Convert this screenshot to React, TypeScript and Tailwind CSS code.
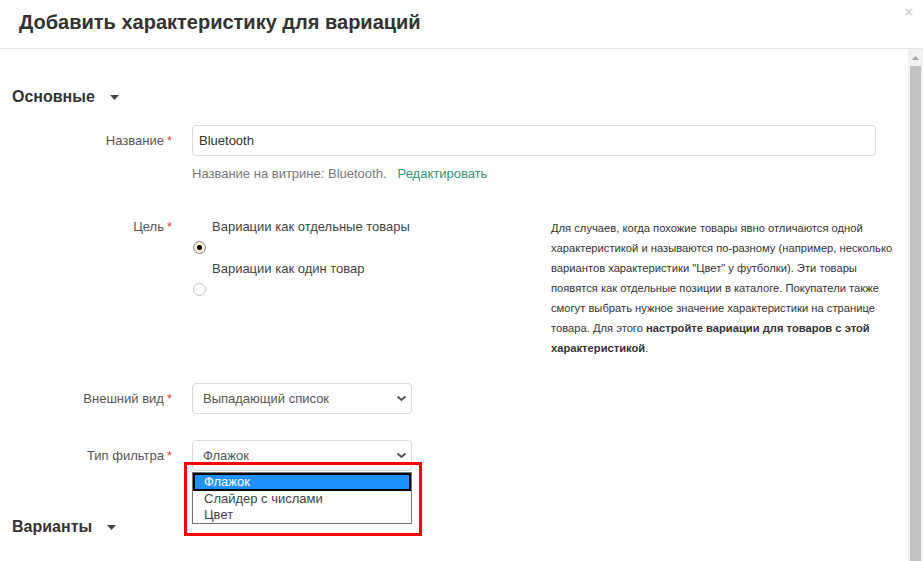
import React from 'react';

const Req = () => <span className="ml-[3px] text-[#e0474c]">*</span>;

const Chevron = () => (
  <svg width="11" height="7" viewBox="0 0 11 7" className="shrink-0">
    <path d="M1.5 1.5 L5.5 5 L9.5 1.5" fill="none" stroke="#555" strokeWidth="2" />
  </svg>
);

const Caret = () => (
  <svg width="9" height="5" viewBox="0 0 9 5" className="ml-[15px]">
    <path d="M0 0 H9 L4.5 5 Z" fill="#444" />
  </svg>
);

const Radio = ({ checked }: { checked?: boolean }) =>
  checked ? (
    <span className="flex h-[13px] w-[13px] items-center justify-center rounded-full border border-[#8a8a8a] bg-[#f7ebd3]">
      <span className="h-[5px] w-[5px] rounded-full bg-black" />
    </span>
  ) : (
    <span className="block h-[13px] w-[13px] rounded-full border border-[#c4c4c4] bg-white" />
  );

const Label = ({ children }: { children: React.ReactNode }) => (
  <div className="w-[164px] shrink-0 pr-[4px] text-right text-[13px] text-[#555]">
    {children}
    <Req />
  </div>
);

const descLines = [
  'Для случаев, когда похожие товары явно отличаются одной',
  'характеристикой и называются по-разному (например, несколько',
  'вариантов характеристики "Цвет" у футболки). Эти товары',
  'появятся как отдельные позиции в каталоге. Покупатели также',
  'смогут выбрать нужное значение характеристики на странице',
];

export default function App() {
  return (
    <div className="flex h-[561px] w-[923px] flex-col overflow-hidden bg-white font-['Liberation_Sans',Arial,sans-serif] text-[#333]">
      <div className="relative flex h-[49px] shrink-0 items-center border-b border-[#e5e5e5] pb-[5px] pl-[19px]">
        <h1 className="text-[20px] font-bold leading-none text-[#333]">Добавить характеристику для вариаций</h1>
        <span className="absolute right-[10px] top-[1px] text-[15px] font-bold text-[#d4d4d4]">×</span>
      </div>
      <div className="flex min-h-0 flex-1">
        <div className="flex-1 pl-[12px]">
          <div className="mt-[38px] flex h-[20px] items-center">
            <span className="text-[16px] font-bold text-[#333]">Основные</span>
            <Caret />
          </div>

          <div className="mt-[18px] flex items-center gap-[16px]">
            <Label>Название</Label>
            <div className="flex h-[31px] w-[684px] items-center rounded-[4px] border border-[#d5dbe2] px-[6px] text-[13px] text-[#333]">
              Bluetooth
            </div>
          </div>
          <div className="ml-[180px] mt-[10px] h-[16px] text-[13px] leading-[16px] text-[#777]">
            Название на витрине: Bluetooth.<span className="ml-[11px] text-[#2f9573]">Редактировать</span>
          </div>

          <div className="mt-[36px] flex">
            <div className="mr-[16px] w-[164px] shrink-0 pr-[4px] text-right text-[13px] leading-[18px] text-[#555]">
              Цель
              <Req />
            </div>
            <div className="w-[359px] shrink-0 text-[13px] text-[#444]">
              <div className="h-[18px] pl-[20px] leading-[18px]">Вариации как отдельные товары</div>
              <div className="h-[24px] pl-[1px] pt-[5px]">
                <Radio checked />
              </div>
              <div className="h-[18px] pl-[20px] leading-[18px]">Вариации как один товар</div>
              <div className="h-[24px] pl-[1px] pt-[5px]">
                <Radio />
              </div>
            </div>
            <p className="whitespace-nowrap text-[11.2px] leading-[20px] text-[#333]">
              {descLines.map((l) => (
                <span key={l} className="block">
                  {l}
                </span>
              ))}
              <span className="block">
                товара. Для этого <b>настройте вариации для товаров с этой</b>
              </span>
              <span className="block">
                <b>характеристикой</b>.
              </span>
            </p>
          </div>

          <div className="mt-[25px] flex items-center gap-[16px]">
            <Label>Внешний вид</Label>
            <div className="flex h-[31px] w-[220px] items-center justify-between rounded-[4px] border border-[#d5dbe2] pl-[10px] pr-[4px] text-[13px] text-[#555]">
              Выпадающий список
              <Chevron />
            </div>
          </div>

          <div className="mt-[26px] flex items-center gap-[16px]">
            <Label>Тип фильтра</Label>
            <div className="relative">
              <div className="flex h-[31px] w-[220px] items-center justify-between rounded-[4px] border border-[#d5dbe2] pl-[10px] pr-[4px] text-[13px] text-[#555]">
                Флажок
                <Chevron />
              </div>
              <div className="absolute left-0 top-[32px] z-10 w-[220px] border border-[#767676] bg-white text-[13px] text-[#444]">
                <div className="h-[18px] border-2 border-black bg-[#1e90ff] pl-[9px] leading-[14px] text-white">Флажок</div>
                <div className="h-[16px] pl-[11px] leading-[16px]">Слайдер с числами</div>
                <div className="h-[16px] pl-[11px] leading-[16px]">Цвет</div>
              </div>
              <div className="absolute left-[-8px] top-[22px] z-20 h-[74px] w-[238px] border-[3px] border-[#ff0000]" />
            </div>
          </div>

          <div className="mt-[46px] flex h-[20px] items-center">
            <span className="text-[16px] font-bold text-[#333]">Варианты</span>
            <Caret />
          </div>
        </div>

        <div className="flex w-[15px] shrink-0 flex-col items-center bg-[#f1f1f1]">
          <div className="flex h-[17px] items-center justify-center">
            <svg width="7" height="4" viewBox="0 0 7 4">
              <path d="M0 4 L3.5 0 L7 4 Z" fill="#a3a3a3" />
            </svg>
          </div>
          <div className="w-[11px] flex-1 bg-[#c1c1c1]" />
        </div>
      </div>
    </div>
  );
}
